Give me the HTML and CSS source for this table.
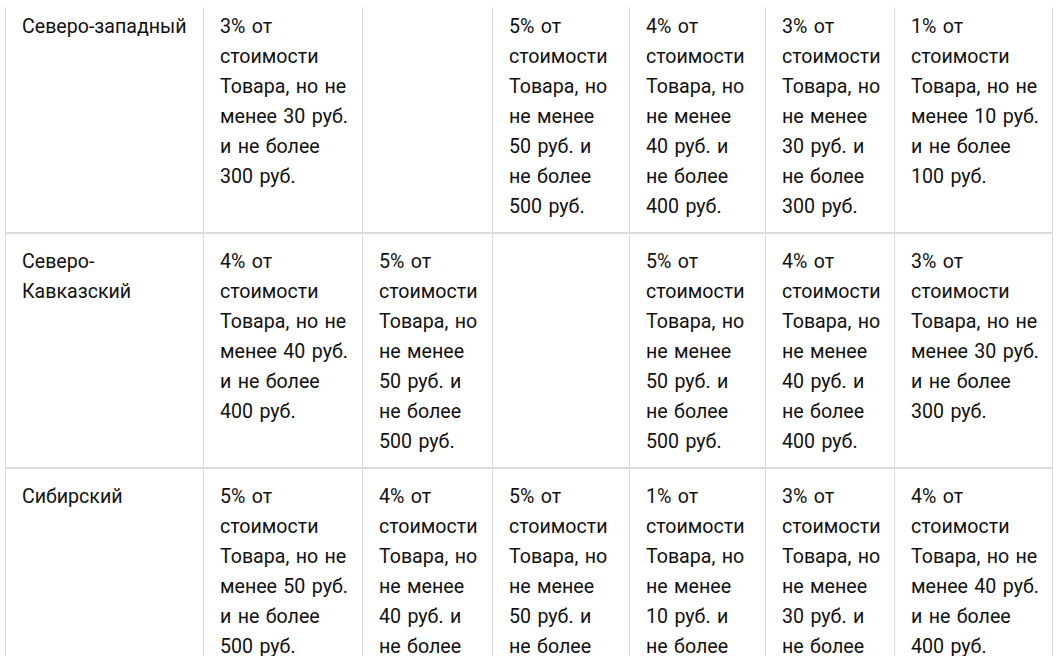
FILE: index.html
```html
<!DOCTYPE html>
<html lang="ru">
<head>
<meta charset="utf-8">
<title>Тарифы</title>
<link rel="stylesheet" href="styles.css">
</head>
<body>
<div class="wrap">
<table class="rates">
<colgroup>
<col class="c1"><col class="c2"><col class="c3"><col class="c4"><col class="c5"><col class="c6"><col class="c7">
</colgroup>
<tbody>
<tr>
<td>Северо-западный</td>
<td>3% от стоимости Товара, но не менее 30 руб. и не более 300 руб.</td>
<td></td>
<td>5% от стоимости Товара, но не менее 50 руб. и не более 500 руб.</td>
<td>4% от стоимости Товара, но не менее 40 руб. и не более 400 руб.</td>
<td>3% от стоимости Товара, но не менее 30 руб. и не более 300 руб.</td>
<td>1% от стоимости Товара, но не менее 10 руб. и не более 100 руб.</td>
</tr>
<tr>
<td>Северо-Кавказский</td>
<td>4% от стоимости Товара, но не менее 40 руб. и не более 400 руб.</td>
<td>5% от стоимости Товара, но не менее 50 руб. и не более 500 руб.</td>
<td></td>
<td>5% от стоимости Товара, но не менее 50 руб. и не более 500 руб.</td>
<td>4% от стоимости Товара, но не менее 40 руб. и не более 400 руб.</td>
<td>3% от стоимости Товара, но не менее 30 руб. и не более 300 руб.</td>
</tr>
<tr>
<td>Сибирский</td>
<td>5% от стоимости Товара, но не менее 50 руб. и не более 500 руб.</td>
<td>4% от стоимости Товара, но не менее 40 руб. и не более 400 руб.</td>
<td>5% от стоимости Товара, но не менее 50 руб. и не более 500 руб.</td>
<td>1% от стоимости Товара, но не менее 10 руб. и не более 100 руб.</td>
<td>3% от стоимости Товара, но не менее 30 руб. и не более 300 руб.</td>
<td>4% от стоимости Товара, но не менее 40 руб. и не более 400 руб.</td>
</tr>
</tbody>
</table>
</div>
</body>
</html>
```
FILE: styles.css
```css
html, body {
  margin: 0;
  padding: 0;
  background: #fff;
  overflow: hidden;
}
body {
  font-family: Roboto, "Noto Sans", sans-serif;
  font-size: 19.6px;
  word-spacing: 1.5px;
  color: #111;
}
.wrap {
  position: relative;
  padding-left: 5px;
  margin-top: -1px;
}
.wrap::before {
  content: "";
  position: absolute;
  left: 0;
  right: 0;
  top: 0;
  height: 8px;
  background: #fff;
  z-index: 1;
}
.rates {
  border-collapse: collapse;
  table-layout: fixed;
  width: 1047px;
}
.c1 { width: 198px; }
.c2 { width: 159px; }
.c3 { width: 130px; }
.c4 { width: 137px; }
.c5 { width: 136px; }
.c6 { width: 129px; }
.c7 { width: 158px; }
.rates td {
  vertical-align: top;
  line-height: 30px;
  padding: 13px 13px 10px 16px;
  border-left: 1px solid #dcdcdc;
  border-right: 1px solid #dcdcdc;
  border-bottom: 2px solid #dcdcdc;
}
.rates tr:first-child td {
  border-top: none;
}
```
